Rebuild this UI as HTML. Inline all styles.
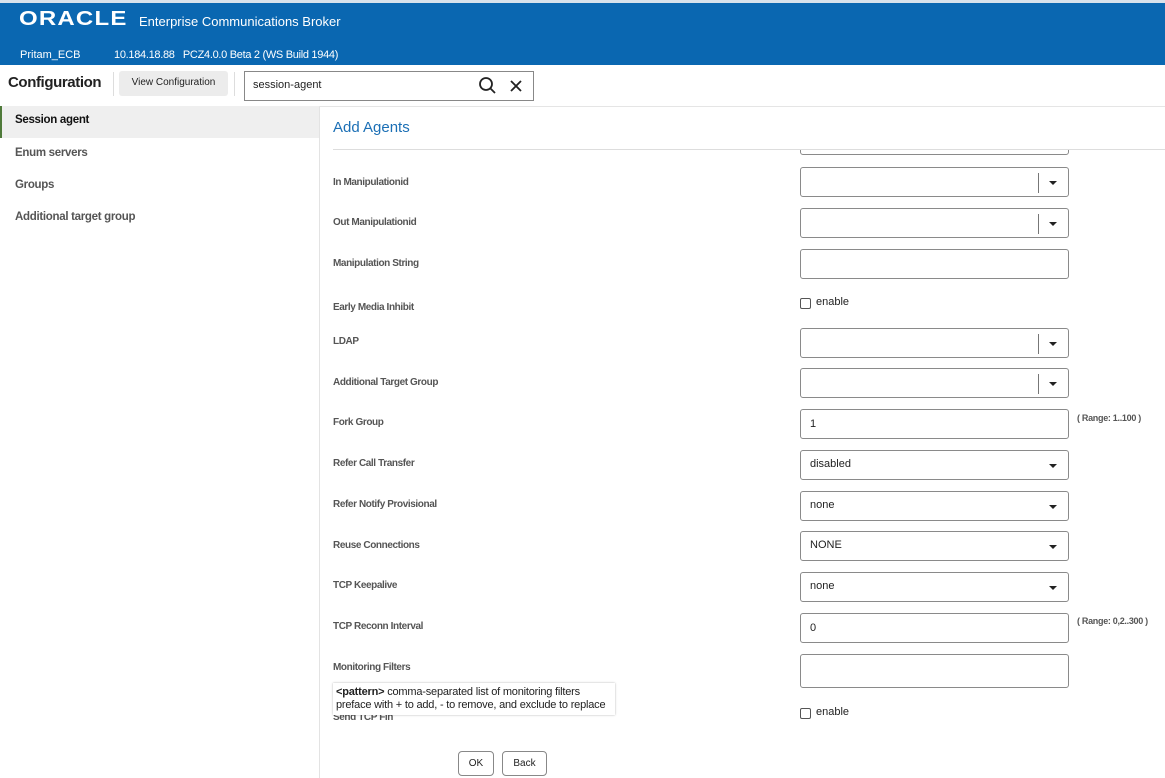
<!DOCTYPE html>
<html><head><style>
*{box-sizing:border-box;margin:0;padding:0}
body{width:1165px;height:778px;overflow:hidden;background:#fff;font-family:"Liberation Sans",sans-serif;position:relative}
.a{position:absolute}
.hdr{left:0;top:0;width:1165px;height:65px;background:#0a67b1;border-top:3px solid #d8e2ec}
.lbl{left:333px;font-size:10px;font-weight:bold;color:#555;letter-spacing:-0.4px}
.box{left:800px;width:269px;height:30px;border:1px solid #8a8a8a;border-radius:3px;background:#fff;font-size:11px;color:#222;padding:8px 0 0 9px}
.sep{position:absolute;right:29px;top:5px;width:1px;height:20px;background:#777}
.tri{position:absolute;right:11px;top:13px;width:0;height:0;border-left:4px solid transparent;border-right:4px solid transparent;border-top:4px solid #222}
.chk{left:800px;width:11px;height:11px;border:1px solid #555;border-radius:2px}
.en{left:816px;font-size:11px;color:#222}
.rng{left:1077px;font-size:9px;font-weight:bold;color:#555;letter-spacing:-0.3px}
.nav{left:15px;font-size:11.5px;font-weight:bold;color:#555;letter-spacing:-0.3px}
</style></head><body>
<div class="a hdr"></div>
<div class="a" style="left:19px;top:8px;font-size:20px;color:#fff;letter-spacing:1px;font-weight:bold;transform:scaleX(1.2);transform-origin:left">ORACLE</div>
<div class="a" style="left:139px;top:14px;font-size:13px;color:#fff">Enterprise Communications Broker</div>
<div class="a" style="left:20px;top:49px;font-size:11px;color:#fff">Pritam_ECB</div>
<div class="a" style="left:114px;top:49px;font-size:11px;color:#fff;letter-spacing:-0.3px">10.184.18.88&nbsp;&nbsp;&nbsp;PCZ4.0.0 Beta 2 (WS Build 1944)</div>
<div class="a" style="left:8px;top:74px;font-size:15px;font-weight:bold;color:#222;letter-spacing:-0.4px">Configuration</div>
<div class="a" style="left:113px;top:72px;width:1px;height:24px;background:#ddd"></div>
<div class="a" style="left:119px;top:71px;width:109px;height:25px;background:#ececec;border-radius:3px;font-size:10px;color:#222;text-align:center;padding-top:6px">View Configuration</div>
<div class="a" style="left:234px;top:72px;width:1px;height:24px;background:#ddd"></div>
<div class="a" style="left:244px;top:71px;width:290px;height:30px;border:1px solid #888;font-size:11px;color:#222;padding:7px 0 0 8px">session-agent</div>
<svg class="a" style="left:478px;top:76px" width="20" height="20" viewBox="0 0 20 20"><circle cx="8" cy="8" r="6" fill="none" stroke="#222" stroke-width="1.8"/><line x1="12.5" y1="12.5" x2="17" y2="17" stroke="#222" stroke-width="1.8"/></svg>
<svg class="a" style="left:509px;top:79px" width="14" height="14" viewBox="0 0 14 14"><path d="M2 2L12 12M12 2L2 12" stroke="#222" stroke-width="1.8"/></svg>
<div class="a" style="left:0;top:106px;width:1165px;height:1px;background:#e5e5e5"></div>
<div class="a" style="left:0;top:106px;width:319px;height:32px;background:#efefef;border-left:2px solid #4f7a3a"></div>
<div class="a nav" style="top:114px;color:#111">Session agent</div>
<div class="a nav" style="top:147px">Enum servers</div>
<div class="a nav" style="top:179px">Groups</div>
<div class="a nav" style="top:211px">Additional target group</div>
<div class="a" style="left:319px;top:107px;width:1px;height:671px;background:#e3e3e3"></div>
<div class="a box" style="top:125px"></div>
<div class="a" style="left:320px;top:108px;width:845px;height:41px;background:#fff"></div>
<div class="a" style="left:333px;top:119px;font-size:15px;color:#1b6fb5">Add Agents</div>
<div class="a" style="left:333px;top:149px;width:832px;height:1px;background:#ddd"></div>

<div class="a lbl" style="top:177px">In Manipulationid</div><div class="a box" style="top:167px"><div class="sep"></div><div class="tri"></div></div>
<div class="a lbl" style="top:217px">Out Manipulationid</div><div class="a box" style="top:208px"><div class="sep"></div><div class="tri"></div></div>
<div class="a lbl" style="top:258px">Manipulation String</div><div class="a box" style="top:249px"></div>
<div class="a lbl" style="top:302px">Early Media Inhibit</div><div class="a chk" style="top:298px"></div><div class="a en" style="top:296px">enable</div>
<div class="a lbl" style="top:336px">LDAP</div><div class="a box" style="top:328px"><div class="sep"></div><div class="tri"></div></div>
<div class="a lbl" style="top:377px">Additional Target Group</div><div class="a box" style="top:368px"><div class="sep"></div><div class="tri"></div></div>
<div class="a lbl" style="top:417px">Fork Group</div><div class="a box" style="top:409px">1</div><div class="a rng" style="top:413px">( Range: 1..100 )</div>
<div class="a lbl" style="top:458px">Refer Call Transfer</div><div class="a box" style="top:450px;padding-top:7px">disabled<div class="tri"></div></div>
<div class="a lbl" style="top:499px">Refer Notify Provisional</div><div class="a box" style="top:491px;padding-top:7px">none<div class="tri"></div></div>
<div class="a lbl" style="top:540px">Reuse Connections</div><div class="a box" style="top:531px;padding-top:7px">NONE<div class="tri"></div></div>
<div class="a lbl" style="top:580px">TCP Keepalive</div><div class="a box" style="top:572px;padding-top:7px">none<div class="tri"></div></div>
<div class="a lbl" style="top:621px">TCP Reconn Interval</div><div class="a box" style="top:613px">0</div><div class="a rng" style="top:616px">( Range: 0,2..300 )</div>
<div class="a lbl" style="top:662px">Monitoring Filters</div><div class="a box" style="top:654px;height:34px"></div>
<div class="a lbl" style="top:712px">Send TCP Fin</div><div class="a chk" style="top:708px"></div><div class="a en" style="top:706px">enable</div>
<div class="a" style="left:333px;top:683px;width:282px;height:32px;background:#fff;box-shadow:0 0 2px rgba(0,0,0,.3);font-size:11px;color:#222;padding:3px 0 0 3px;line-height:13px;letter-spacing:-0.2px"><b>&lt;pattern&gt;</b> comma-separated list of monitoring filters<br>preface with + to add, - to remove, and exclude to replace</div>
<div class="a" style="left:458px;top:751px;width:36px;height:25px;border:1px solid #888;border-radius:4px;font-size:10px;text-align:center;padding-top:6px;color:#222">OK</div>
<div class="a" style="left:502px;top:751px;width:45px;height:25px;border:1px solid #888;border-radius:4px;font-size:10px;text-align:center;padding-top:6px;color:#222">Back</div>
</body></html>
